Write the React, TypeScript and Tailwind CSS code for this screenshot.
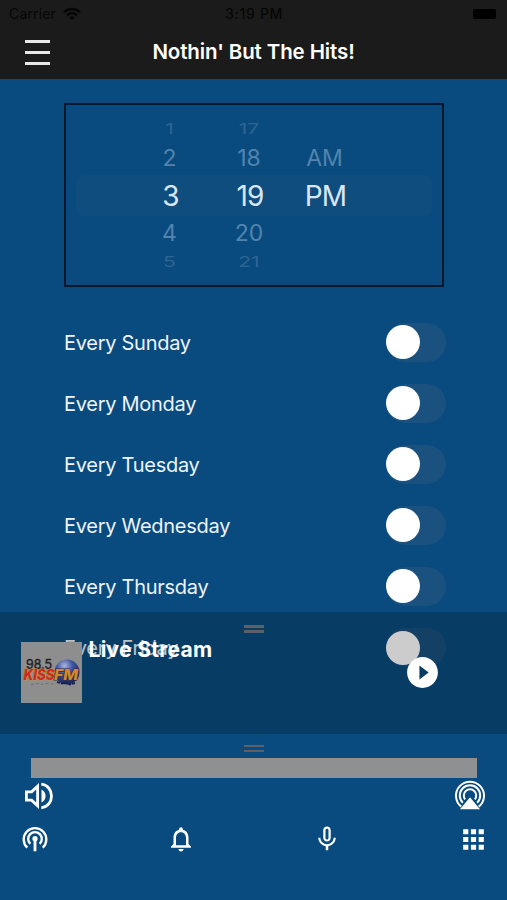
import React from "react";
import { MdApps, MdMicNone, MdNotificationsNone, MdPlayCircleFilled } from "react-icons/md";

const DAYS = ["Sunday", "Monday", "Tuesday", "Wednesday", "Thursday", "Friday"];

const WHEEL = [
  { cells: ["1", "17", ""], row: "h-6", text: "text-[21px] scale-y-[0.68] text-[#2f6492]" },
  { cells: ["2", "18", "AM"], row: "h-[34px]", text: "text-[23px] pt-px text-[#5284ad]" },
  { cells: ["3", "19", "PM"], row: "h-[41px] rounded-lg bg-[#104d7f]", text: "text-[28px] tracking-[-0.9px] pl-[2px] text-[#d9e6f5]" },
  { cells: ["4", "20", ""], row: "h-[34px]", text: "text-[23px] text-[#5284ad]" },
  { cells: ["5", "21", ""], row: "h-6", text: "text-[21px] scale-y-[0.68] text-[#2f6492]" },
];

function StatusBar() {
  return (
    <div className="relative flex h-[27px] items-center justify-between pl-[9px] pr-[11px] text-[14px] leading-none text-[#060606]">
      <div className="flex items-center gap-[7px]">
        <span className="tracking-[0.15px]">Carrier</span>
        <svg width="18" height="14" viewBox="0 0 18 14" fill="none" stroke="currentColor" strokeWidth="2.5">
          <path d="M1 5.2C5.5.8 12.5.8 17 5.2" />
          <path d="M4 8.3c2.8-2.7 7.2-2.7 10 0" />
          <path d="M6.3 10.2c1.6-1.4 3.8-1.4 5.4 0L9 13z" fill="currentColor" stroke="none" />
        </svg>
      </div>
      <span className="absolute left-[225px] whitespace-nowrap font-medium tracking-[0.7px]">3:19 PM</span>
      <div className="h-[10px] w-[23px] rounded-[2px] bg-black" />
    </div>
  );
}

function Header() {
  return (
    <header className="h-[79px] shrink-0 bg-[#1b1b1b]">
      <StatusBar />
      <div className="grid h-[50px] grid-cols-[25px_1fr_25px] items-center px-[25px]">
        <div className="flex flex-col gap-2">
          <div className="h-[3px] bg-[#e8e8e8]" />
          <div className="h-[3px] bg-[#e8e8e8]" />
          <div className="h-[3px] bg-[#e8e8e8]" />
        </div>
        <h1 className="whitespace-nowrap pt-px text-center text-[20.5px] font-semibold tracking-[-0.12px] text-white">
          Nothin' But The Hits!
        </h1>
      </div>
    </header>
  );
}

function TimePicker() {
  return (
    <div className="mx-auto mt-6 h-[184px] w-[380px] border-2 border-[#03172d] px-[10px] pt-3">
      {WHEEL.map((line) => (
        <div key={line.cells[0]} className={`grid grid-cols-[80px_79px_72px] pl-[54px] ${line.row}`}>
          {line.cells.map((cell, i) => (
            <span key={i} className={`flex items-center justify-center leading-none ${line.text}`}>
              {cell}
            </span>
          ))}
        </div>
      ))}
    </div>
  );
}

function DayRow({ day }: { day: string }) {
  return (
    <div className="flex h-[61.1px] shrink-0 items-center justify-between pl-16 pr-[61px]">
      <span className="pt-[1.5px] text-[20px] tracking-[-0.28px] text-[#eef4fa]">Every {day}</span>
      <div className="flex h-[39px] w-[60px] items-center rounded-full bg-[#1b517f]">
        <div className="size-[34px] rounded-full bg-white" />
      </div>
    </div>
  );
}

function Handle() {
  return (
    <div className="mx-auto flex w-5 flex-col gap-[2.5px]">
      <div className="h-[2.5px] bg-[#5d6064]" />
      <div className="h-[2.5px] bg-[#5d6064]" />
    </div>
  );
}

function StationLogo() {
  return (
    <svg className="size-[61px] bg-[#8e8e8f]" viewBox="0 0 61 61">
      <defs>
        <radialGradient id="globe" cx="0.4" cy="0.25" r="0.8">
          <stop offset="0" stopColor="#a9b4df" />
          <stop offset="0.4" stopColor="#4055a0" />
          <stop offset="1" stopColor="#141e50" />
        </radialGradient>
      </defs>
      <circle cx="46" cy="30" r="12.5" fill="url(#globe)" />
      <text x="5" y="27" fontSize="12.5" textLength="26" lengthAdjust="spacingAndGlyphs" fill="#222" stroke="#222" strokeWidth="0.4">98.5</text>
      <g fontSize="14.5" fontWeight="800" fontStyle="italic" paintOrder="stroke">
        <text x="2.5" y="38" textLength="31" lengthAdjust="spacingAndGlyphs" fill="#cf2a1c" stroke="#c9902b" strokeWidth="0.9">KISS</text>
        <text x="33" y="38" textLength="24" lengthAdjust="spacingAndGlyphs" fill="#d08a2b" stroke="#3b2c36" strokeWidth="1.2">FM</text>
      </g>
      <path d="M10 42.5l6-1 5 1 7-1.5 6 1.5" fill="none" stroke="#707070" strokeWidth="1" strokeDasharray="3 2" />
      <path d="M36 40l5 1.5 4-1 4 2 5-1.5" fill="none" stroke="#17204f" strokeWidth="2" strokeDasharray="3 1" />
    </svg>
  );
}

function MiniPlayer() {
  return (
    <section className="absolute inset-x-0 bottom-0 h-[122px] bg-black/20 pt-[13px]">
      <Handle />
      <div className="flex pl-[20.5px] pr-[66px] pt-[9.5px]">
        <StationLogo />
        <span className="ml-[7px] mt-[-4px] whitespace-nowrap text-[21px] font-bold leading-6 tracking-[0.28px] text-white">Live Stream</span>
        <MdPlayCircleFilled className="ml-auto mt-[12px] size-[37px] text-white" />
      </div>
    </section>
  );
}

function VolumeIcon() {
  return (
    <svg width="30" height="28" viewBox="0 0 30 28" fill="none" stroke="white" strokeWidth="2.8">
      <path d="M2.4 9.8h5.2l6-5.6v19.6l-6-5.6H2.4z" />
      <path d="M17.5 7.5c5.4 2.4 5.4 10.6 0 13z" fill="white" stroke="none" />
      <path d="M17.3 2.2c13.6 1.4 13.6 22.2 0 23.6" />
    </svg>
  );
}

function AirplayIcon() {
  return (
    <svg width="32" height="32" viewBox="0 0 32 32" fill="none" stroke="white" strokeWidth="2">
      <path d="M7.2 26.6a14 14 0 1 1 17.6 0" />
      <path d="M8.8 22.7a10.2 10.2 0 1 1 14.4 0" />
      <path d="M11.2 19.4a6.2 6.2 0 1 1 9.6 0" />
      <path d="M16 17.3l10 11.9H6z" fill="white" stroke="none" />
    </svg>
  );
}

function PodcastIcon() {
  return (
    <svg width="26" height="26" viewBox="0 0 26 26" fill="none" stroke="white" strokeWidth="2.4">
      <path d="M5.3 21.7a11.3 11.3 0 1 1 15.4 0" />
      <path d="M8.3 17.8a6.8 6.8 0 1 1 9.4 0" />
      <circle cx="13" cy="12.7" r="2.6" fill="white" stroke="none" />
      <path d="M13 13v12.3" strokeWidth="2.8" />
    </svg>
  );
}

function BottomPanel() {
  return (
    <footer className="h-[166px] shrink-0 pt-[10.5px]">
      <Handle />
      <div className="ml-[31px] mt-[6px] h-[20px] w-[445.5px] bg-[#8f9091]" />
      <div className="flex h-[36px] items-center justify-between pl-6 pr-[21px]">
        <VolumeIcon />
        <AirplayIcon />
      </div>
      <nav className="flex h-[50px] items-center justify-between pl-[20px] pr-[18px] text-[30px] text-white">
        <div className="flex w-[30px] justify-center"><PodcastIcon /></div>
        <MdNotificationsNone />
        <MdMicNone />
        <MdApps className="size-[31px]" />
      </nav>
    </footer>
  );
}

export default function App() {
  return (
    <div className="flex h-[900px] w-[507px] flex-col overflow-hidden bg-[#094b7f] font-['Inter','Liberation_Sans',sans-serif]">
      <Header />
      <main className="relative h-[655px] shrink-0 overflow-hidden">
        <TimePicker />
        <div className="flex flex-col pt-[24.5px]">
          {DAYS.map((day) => (
            <DayRow key={day} day={day} />
          ))}
        </div>
        <MiniPlayer />
      </main>
      <BottomPanel />
    </div>
  );
}
